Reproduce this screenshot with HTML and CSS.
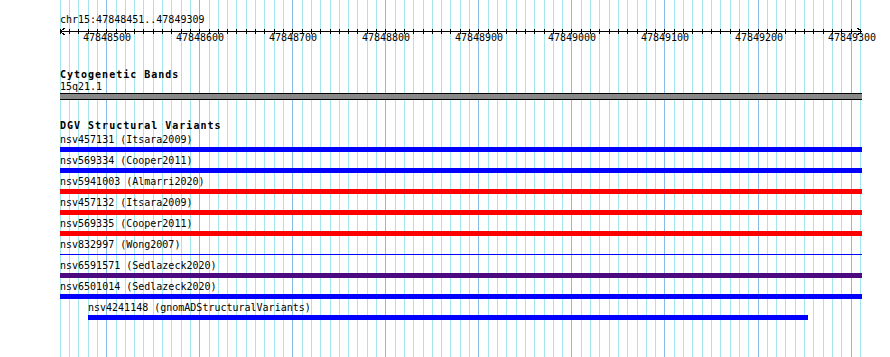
FILE: index.html
```html
<!DOCTYPE html>
<html lang="en">
<head>
    <meta charset="UTF-8">
    <title>chr15:47848451..47849309</title>
    <link rel="stylesheet" href="styles.css">
</head>
<body>
    <div class="browser">
        <svg class="guides" id="guides" width="802" height="357"></svg>
        <div class="track-area">
            <div class="position">chr15:47848451..47849309</div>
            <svg class="ruler" id="ruler" width="802" height="16"></svg>

            <div class="track-title">Cytogenetic Bands</div>
            <div class="item-label">15q21.1</div>
            <div class="band"></div>

            <div class="track-title dgv-title">DGV Structural Variants</div>
            <div class="sv-list">
                <div class="sv"><div class="sv-label">nsv457131 (Itsara2009)</div><div class="sv-bar loss"></div></div>
                <div class="sv"><div class="sv-label">nsv569334 (Cooper2011)</div><div class="sv-bar loss"></div></div>
                <div class="sv"><div class="sv-label">nsv5941003 (Almarri2020)</div><div class="sv-bar gain"></div></div>
                <div class="sv"><div class="sv-label">nsv457132 (Itsara2009)</div><div class="sv-bar gain"></div></div>
                <div class="sv"><div class="sv-label">nsv569335 (Cooper2011)</div><div class="sv-bar gain"></div></div>
                <div class="sv"><div class="sv-label">nsv832997 (Wong2007)</div><div class="sv-bar loss thin"></div></div>
                <div class="sv"><div class="sv-label">nsv6591571 (Sedlazeck2020)</div><div class="sv-bar both"></div></div>
                <div class="sv"><div class="sv-label">nsv6501014 (Sedlazeck2020)</div><div class="sv-bar loss"></div></div>
                <div class="sv" style="margin-left: 28px; width: 720px;"><div class="sv-label">nsv4241148 (gnomADStructuralVariants)</div><div class="sv-bar loss"></div></div>
            </div>
        </div>
    </div>

    <script>
        // guide lines and ruler ticks every 10 bases
        const NS = 'http://www.w3.org/2000/svg';
        const guides = document.getElementById('guides');
        const ruler = document.getElementById('ruler');

        function xOf(bp) {
            return Math.floor(46.7 + (bp - 47848500) * 0.93045);
        }

        function line(parent, x1, y1, x2, y2, cls) {
            const l = document.createElementNS(NS, 'line');
            l.setAttribute('x1', x1);
            l.setAttribute('y1', y1);
            l.setAttribute('x2', x2);
            l.setAttribute('y2', y2);
            l.setAttribute('class', cls);
            parent.appendChild(l);
        }

        line(ruler, 0, 5.5, 802, 5.5, 'tick');
        ruler.innerHTML += '<polyline class="tick" points="4.5,2 0.5,5.5 4.5,9"/>' +
            '<polyline class="tick" points="797.5,2 801.5,5.5 797.5,9"/>';

        for (let bp = 47848450; bp <= 47849310; bp += 10) {
            const x = xOf(bp) + 0.5;
            line(guides, x, 0, x, 357, bp % 100 === 0 ? 'major' : 'minor');
            line(ruler, x, 3, x, 8, 'tick');
            if (bp % 100 === 0 && bp > 47848450) {
                const t = document.createElementNS(NS, 'text');
                t.setAttribute('x', xOf(bp) + 1);
                t.setAttribute('y', 15);
                t.setAttribute('class', 'tick-label');
                t.textContent = bp;
                ruler.appendChild(t);
            }
        }
    </script>
</body>
</html>
```

FILE: styles.css
```css
body {
    margin: 0;
    background-color: #fff;
    font-family: "DejaVu Sans Mono", "Liberation Mono", monospace;
    font-size: 10px;
    color: #000;
}

.browser {
    position: relative;
    margin-left: 60px;
    width: 802px;
    height: 357px;
}

.guides {
    position: absolute;
    top: 0;
    left: 0;
    shape-rendering: crispEdges;
}

.guides .minor {
    stroke: #a4e6ee;
    stroke-width: 1;
}

.guides .major {
    stroke: #88bbea;
    stroke-width: 1;
}

.track-area {
    position: relative;
    padding-top: 14px;
}

.position,
.item-label,
.sv-label,
.track-title {
    line-height: 12px;
    height: 12px;
    white-space: nowrap;
}

.ruler {
    display: block;
    overflow: visible;
    shape-rendering: crispEdges;
}

.ruler .tick {
    stroke: #000;
    stroke-width: 1;
    fill: none;
}

.ruler .tick-label {
    font-family: "DejaVu Sans Mono", "Liberation Mono", monospace;
    font-size: 10px;
    text-anchor: middle;
    fill: #000;
}

.track-title {
    margin-top: 27px;
    font-weight: bold;
    letter-spacing: 1px;
}

.dgv-title {
    margin-top: 20px;
}

.band {
    height: 7px;
    box-sizing: border-box;
    background-color: #888;
    border-top: 1px solid #000;
    border-bottom: 1px solid #000;
}

.sv-list {
    margin-top: 2px;
}

.sv {
    width: 802px;
}

.sv-bar {
    height: 5px;
    margin-top: 1px;
    margin-bottom: 3px;
}

.sv-bar.thin {
    height: 1px;
    margin-top: 3px;
    margin-bottom: 5px;
}

.loss {
    background-color: #0000ff;
}

.gain {
    background-color: #ff0000;
}

.both {
    background-color: #4b0a80;
}
```
